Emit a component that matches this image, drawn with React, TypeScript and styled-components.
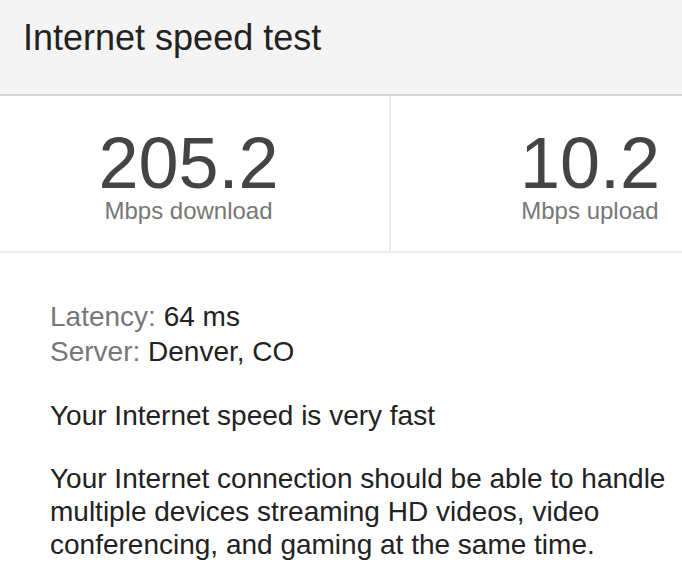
import React from "react";
import styled, { createGlobalStyle } from "styled-components";

const Global = createGlobalStyle`
  html, body {
    margin: 0;
    padding: 0;
    background: #ffffff;
    overflow: hidden;
  }
  body {
    font-family: "Liberation Sans", Arial, Helvetica, sans-serif;
    width: 682px;
  }
`;

const Card = styled.div`
  width: 682px;
  height: 576px;
  overflow: hidden;
  background: #fff;
`;

const Header = styled.header`
  box-sizing: border-box;
  height: 96px;
  padding: 16px 23px 0;
  background: #f4f4f4;
  border-bottom: 2px solid #d5d5d5;
`;

const Title = styled.h1`
  margin: 0;
  font-size: 36px;
  line-height: 44px;
  font-weight: 400;
  color: #222;
`;

const Stats = styled.div`
  display: grid;
  grid-template-columns: 389px 400px;
  border-bottom: 2px solid #ececec;
`;

const Stat = styled.div<{ $divider?: boolean; $padRight?: number }>`
  box-sizing: border-box;
  display: flex;
  flex-direction: column;
  align-items: center;
  padding: 35px ${(p) => p.$padRight ?? 0}px 26px 0;
  border-left: ${(p) => (p.$divider ? "2px solid #ececec" : "none")};
`;

const Value = styled.div`
  font-size: 72px;
  line-height: 64px;
  color: #444;
`;

const Unit = styled.div`
  margin-top: 2px;
  font-size: 24px;
  line-height: 28px;
  color: #777;
`;

const Details = styled.section`
  padding: 46px 0 0 50px;
`;

const InfoLine = styled.div`
  font-size: 28px;
  line-height: 35px;
  color: #222;
`;

const InfoLabel = styled.span`
  color: #777;
`;

const Paragraph = styled.p`
  margin: 30px 0 0;
  font-size: 28px;
  line-height: 33px;
  color: #222;
`;

export default function App() {
  return (
    <>
      <Global />
      <Card>
        <Header>
          <Title>Internet speed test</Title>
        </Header>
        <Stats>
          <Stat $padRight={12}>
            <Value>205.2</Value>
            <Unit>Mbps download</Unit>
          </Stat>
          <Stat $divider>
            <Value>10.2</Value>
            <Unit>Mbps upload</Unit>
          </Stat>
        </Stats>
        <Details>
          <InfoLine>
            <InfoLabel>Latency:</InfoLabel> 64 ms
          </InfoLine>
          <InfoLine>
            <InfoLabel>Server:</InfoLabel> Denver, CO
          </InfoLine>
          <Paragraph>Your Internet speed is very fast</Paragraph>
          <Paragraph>
            Your Internet connection should be able to handle multiple devices
            streaming HD videos, video conferencing, and gaming at the same time.
          </Paragraph>
        </Details>
      </Card>
    </>
  );
}
